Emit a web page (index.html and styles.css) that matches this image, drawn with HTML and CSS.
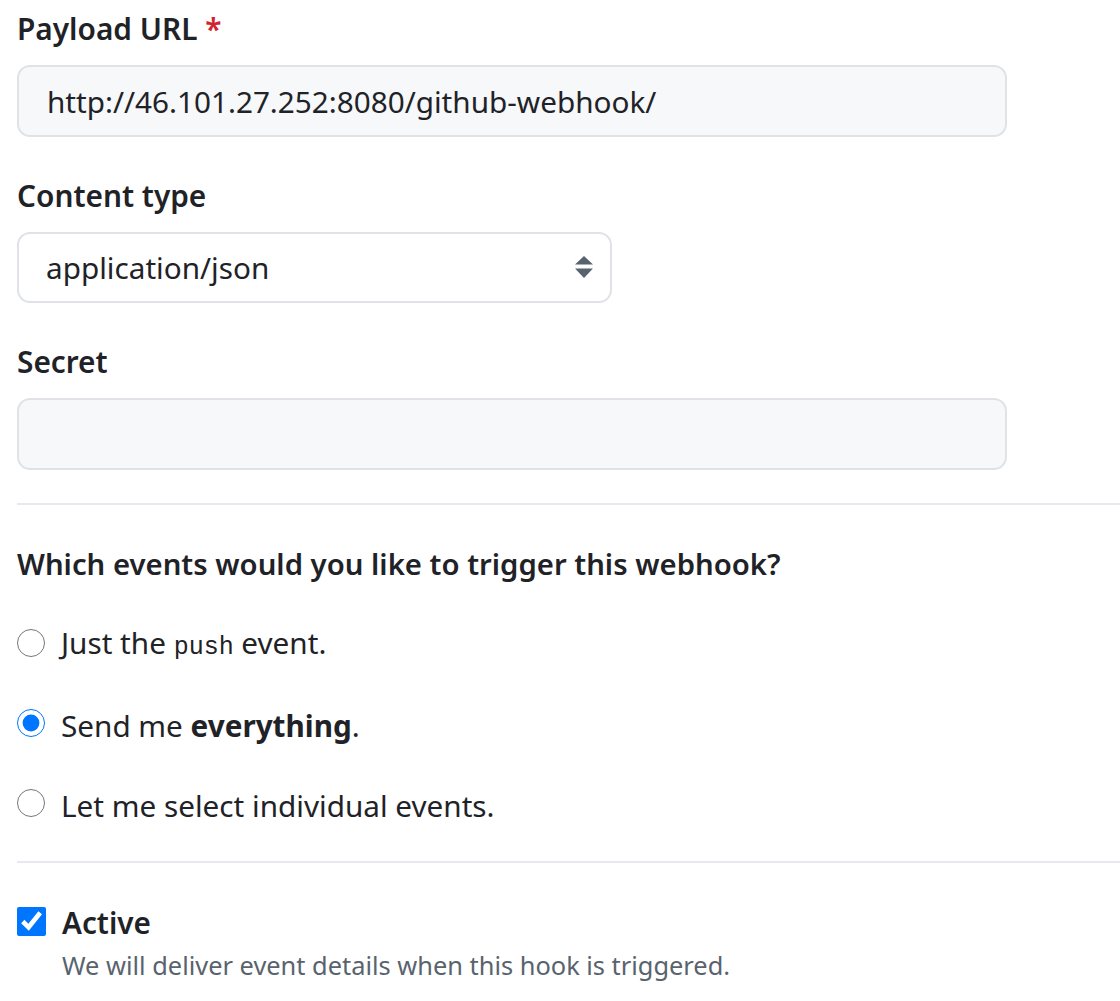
FILE: index.html
```html
<!DOCTYPE html>
<html lang="en">
<head>
<meta charset="utf-8">
<title>Webhook</title>
<link rel="stylesheet" href="styles.css">
</head>
<body>
<form class="hook-form">
  <div class="form-group">
    <label class="field-label" for="url">Payload URL <span class="req">*</span></label>
    <input id="url" class="text-input" type="text" value="http://46.101.27.252:8080/github-webhook/">
  </div>
  <div class="form-group">
    <label class="field-label" for="ctype">Content type</label>
    <div class="select-wrap">
      <select id="ctype" class="select-input">
        <option>application/json</option>
        <option>application/x-www-form-urlencoded</option>
      </select>
      <svg class="select-arrows" width="18" height="24" viewBox="0 0 18 24" aria-hidden="true">
        <path d="M9 1 L18 9.5 L0 9.5 Z" fill="#59636e"/>
        <path d="M0 13.5 L18 13.5 L9 23 Z" fill="#59636e"/>
      </svg>
    </div>
  </div>
  <div class="form-group">
    <label class="field-label" for="secret">Secret</label>
    <input id="secret" class="text-input" type="text" value="">
  </div>
  <hr class="divider">
  <h4 class="events-heading">Which events would you like to trigger this webhook?</h4>
  <div class="radio-list">
    <label class="radio-row"><input type="radio" name="ev" class="radio"> <span class="opt-text">Just the <code class="code">push</code> event.</span></label>
    <label class="radio-row"><input type="radio" name="ev" class="radio" checked> <span class="opt-text">Send me <strong>everything</strong>.</span></label>
    <label class="radio-row"><input type="radio" name="ev" class="radio"> <span class="opt-text">Let me select individual events.</span></label>
  </div>
  <hr class="divider divider-2">
  <div class="active-block">
    <label class="check-row"><input type="checkbox" class="check" checked> <span class="check-label">Active</span></label>
    <p class="note">We will deliver event details when this hook is triggered.</p>
  </div>
</form>
</body>
</html>
```

FILE: styles.css
```css
html, body {
  margin: 0;
  padding: 0;
  background: #ffffff;
}
body {
  font-family: "Noto Sans", "Open Sans", "DejaVu Sans", sans-serif;
  color: #1f2328;
  font-size: 29.7px;
  line-height: 48px;
}
.hook-form {
  padding: 5px 0 0 17px;
}
.form-group {
  display: flex;
  flex-direction: column;
  align-items: flex-start;
  margin-bottom: 35px;
}
.field-label {
  font-weight: 600;
  font-size: 29.8px;
  line-height: 48px;
  margin-bottom: 12px;
}
.req {
  color: #d1242f;
}
.text-input {
  box-sizing: border-box;
  width: 990px;
  height: 72px;
  border: 2px solid #dfe3e8;
  border-radius: 13px;
  background: #f6f8fa;
  padding: 0 28px;
  font: inherit;
  color: #1f2328;
  outline: none;
}
.select-wrap {
  position: relative;
  width: 595px;
}
.select-input {
  appearance: none;
  -webkit-appearance: none;
  box-sizing: border-box;
  width: 595px;
  height: 71px;
  border: 2px solid #dfe3e8;
  border-radius: 13px;
  background: #ffffff;
  padding: 0 27px;
  font: inherit;
  color: #1f2328;
  outline: none;
}
.select-arrows {
  position: absolute;
  right: 19px;
  top: 23px;
}
.divider {
  border: 0;
  height: 2px;
  background: #e8e9ee;
  margin: 0 0 35px 0;
}
.hook-form .form-group:nth-of-type(3) {
  margin-bottom: 33px;
}
.events-heading {
  margin: 0 0 31px 0;
  font-size: 29.3px;
  font-weight: 600;
  line-height: 48px;
}
.radio-list {
  display: flex;
  flex-direction: column;
  gap: 32px;
}
.radio-row {
  display: flex;
  align-items: center;
  gap: 16px;
  height: 48px;
}
.opt-text {
  padding-top: 5px;
}
.radio {
  width: 28px;
  height: 28px;
  margin: 0;
  accent-color: #0075ff;
}
.code {
  font-family: "Liberation Mono", "DejaVu Sans Mono", monospace;
  font-size: 25px;
}
.divider-2 {
  margin: 34px 0 34px 0;
}
.check-row {
  display: flex;
  align-items: center;
  gap: 16px;
  height: 48px;
}
.check {
  width: 29px;
  height: 29px;
  margin: 0;
  accent-color: #0075ff;
}
.check-label {
  font-weight: 600;
  padding-top: 3px;
}
.note {
  margin: 0 0 0 45px;
  font-size: 25.4px;
  line-height: 41px;
  color: #59636e;
}
```
